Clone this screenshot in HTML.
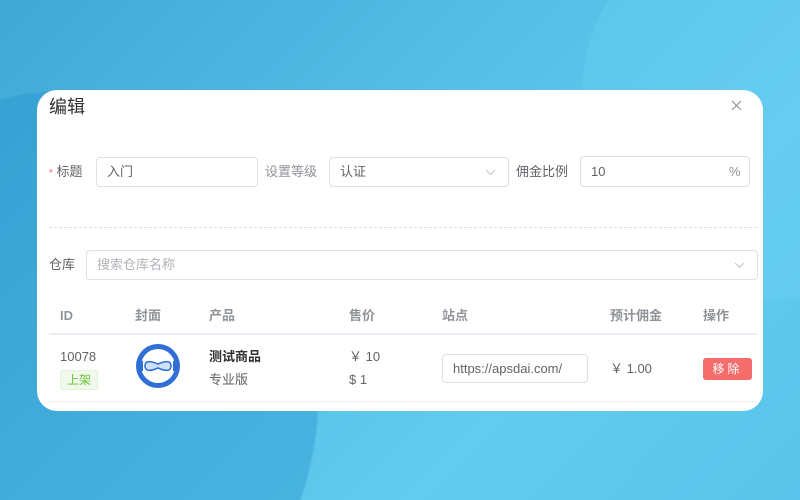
<!DOCTYPE html>
<html><head><meta charset="utf-8">
<style>
*{margin:0;padding:0;box-sizing:border-box}
html,body{width:800px;height:500px;overflow:hidden}
body{position:relative;font-family:"Liberation Sans","Noto Sans CJK SC",sans-serif;color:#606266;
background:radial-gradient(ellipse 260px 300px at 60px 390px,rgba(30,140,200,0.35) 99%,transparent 100%),radial-gradient(circle 200px at 780px 100px,rgba(110,210,245,0.3) 99%,transparent 100%),linear-gradient(135deg,#3fa8d6 0%,#55bee6 40%,#62cbef 70%,#5ac4ea 100%)}
.dlg{position:absolute;left:37px;top:90px;width:726px;height:321px;background:#fff;border-radius:20px;overflow:hidden}
.a{position:absolute;font-size:13px;line-height:16px;white-space:nowrap}
.inp{position:absolute;border:1px solid #dcdfe6;border-radius:4px;height:30px;font-size:13px;padding-left:10px;line-height:28px;color:#606266;background:#fff}
.th{position:absolute;top:218px;font-size:13px;line-height:16px;font-weight:bold;color:#909399}
</style></head><body>
<div class="dlg">
<div class="a" style="left:12px;top:6px;font-size:18px;line-height:22px;color:#303133">编辑</div>
<svg style="position:absolute;left:694px;top:10px" width="11" height="11" viewBox="0 0 11 11"><path d="M1 1L10 10M10 1L1 10" stroke="#909399" stroke-width="1.2"/></svg>
<div class="a" style="left:12px;top:74px"><span style="color:#f56c6c;font-size:10px">*</span> 标题</div>
<div class="inp" style="left:59px;top:67px;width:162px">入门</div>
<div class="a" style="left:228px;top:74px;color:#909399">设置等级</div>
<div class="inp" style="left:292px;top:67px;width:180px">认证</div>
<svg style="position:absolute;left:448px;top:78px" width="11" height="8" viewBox="0 0 11 8"><path d="M1 2L5.5 6.5L10 2" stroke="#c0c4cc" fill="none"/></svg>
<div class="a" style="left:479px;top:74px">佣金比例</div>
<div class="inp" style="left:543px;top:66px;width:170px;height:31px;line-height:29px">10</div>
<div class="a" style="left:692px;top:74px;color:#909399">%</div>
<div style="position:absolute;left:12px;top:137px;width:708px;border-top:1px dashed #dcdfe6"></div>
<div class="a" style="left:12px;top:167px">仓库</div>
<div class="inp" style="left:49px;top:160px;width:672px;color:#b0b3b9">搜索仓库名称</div>
<svg style="position:absolute;left:697px;top:171px" width="11" height="8" viewBox="0 0 11 8"><path d="M1 2L5.5 6.5L10 2" stroke="#c0c4cc" fill="none"/></svg>
<div class="th" style="left:23px">ID</div>
<div class="th" style="left:98px">封面</div>
<div class="th" style="left:172px">产品</div>
<div class="th" style="left:312px">售价</div>
<div class="th" style="left:405px">站点</div>
<div class="th" style="left:573px">预计佣金</div>
<div class="th" style="left:666px">操作</div>
<div style="position:absolute;left:12px;top:243px;width:708px;border-top:2px solid #ebeef5"></div>
<div class="a" style="left:23px;top:259px">10078</div>
<div class="a" style="left:23px;top:280px;font-size:12px;color:#67c23a;background:#f0f9eb;border:1px solid #e1f3d8;border-radius:3px;padding:1px 6px">上架</div>
<svg style="position:absolute;left:98px;top:253px" width="46" height="46" viewBox="0 0 46 46"><circle cx="23" cy="23" r="22" fill="#2f6fd6"/><circle cx="23" cy="23" r="17" fill="#fff"/><path d="M10 23c0-6 6-5 13-2c7-3 13-4 13 2s-6 5-13 2c-7 3-13 4-13-2z" fill="#cfe0f7" stroke="#2f6fd6" stroke-width="1.5"/><path d="M7 18v10M39 18v10" stroke="#2f6fd6" stroke-width="2"/></svg>
<div class="a" style="left:172px;top:259px;font-weight:bold;color:#303133">测试商品</div>
<div class="a" style="left:172px;top:282px">专业版</div>
<div class="a" style="left:312px;top:259px">￥ 10</div>
<div class="a" style="left:312px;top:282px">$ 1</div>
<div class="inp" style="left:405px;top:264px;width:146px;height:29px;font-size:13px">https://apsdai.com/</div>
<div class="a" style="left:573px;top:271px">￥ 1.00</div>
<div class="a" style="left:666px;top:268px;width:49px;height:22px;background:#f56c6c;color:#fff;border-radius:3px;font-size:12px;text-align:center;line-height:22px;letter-spacing:3px">移除</div>
<div style="position:absolute;left:12px;top:311px;width:708px;border-top:1px solid #ebeef5"></div>
</div>
</body></html>
